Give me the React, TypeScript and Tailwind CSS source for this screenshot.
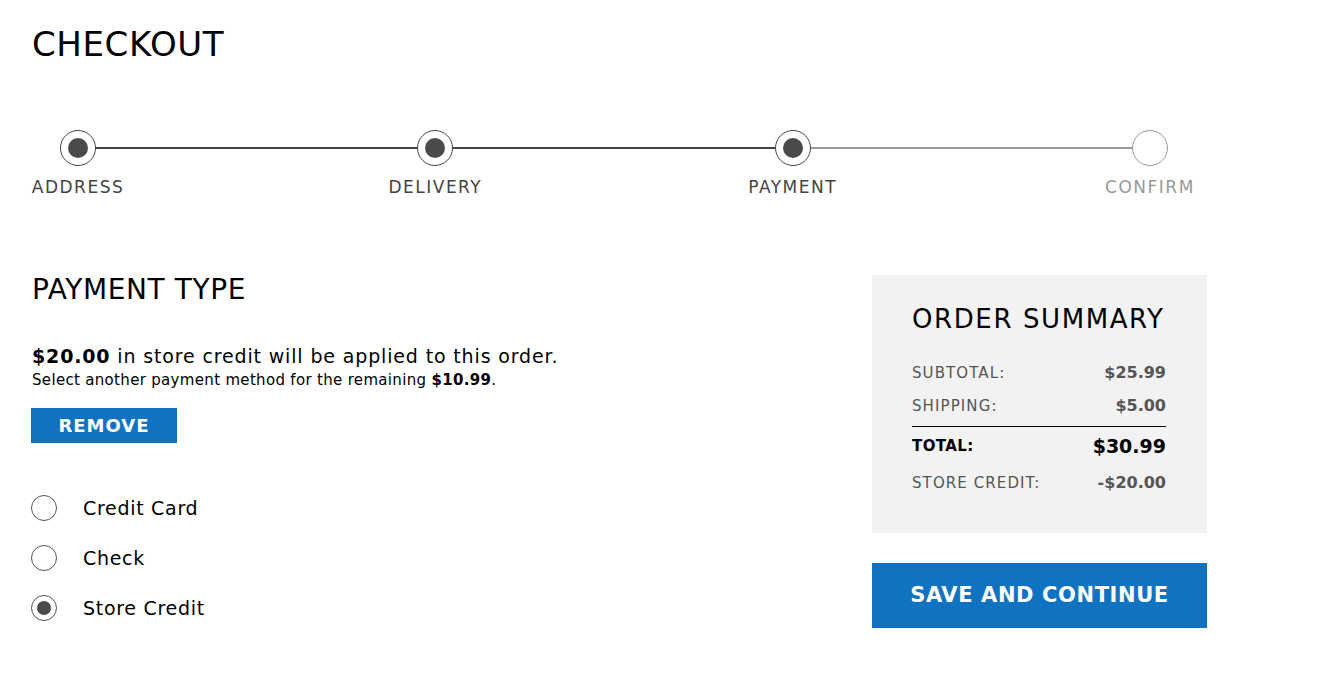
import React from "react";

const steps = [
  { label: "ADDRESS", done: true },
  { label: "DELIVERY", done: true },
  { label: "PAYMENT", done: true },
  { label: "CONFIRM", done: false },
];

const StepDot = ({ done }: { done: boolean }) =>
  done ? (
    <div className="w-[36px] h-[36px] rounded-full border-[1.5px] border-[#444] flex items-center justify-center shrink-0">
      <div className="w-[20px] h-[20px] rounded-full bg-[#4a4a4a]"></div>
    </div>
  ) : (
    <div className="w-[36px] h-[36px] rounded-full border-[1.5px] border-[#9a9a9a] shrink-0"></div>
  );

const Radio = ({ label, checked }: { label: string; checked?: boolean }) => (
  <div className="flex items-center h-[26px]">
    <div className="w-[26px] h-[26px] rounded-full border-[1.5px] border-[#555] flex items-center justify-center">
      {checked && <div className="w-[14px] h-[14px] rounded-full bg-[#4a4a4a]"></div>}
    </div>
    <span className="ml-[26px] text-[19px] leading-none tracking-[0.7px] text-black">{label}</span>
  </div>
);

const SummaryRow = ({ label, value }: { label: string; value: string }) => (
  <div className="flex items-center justify-between h-[20px]">
    <span className="text-[15px] leading-none tracking-[1.1px] text-[#555]">{label}</span>
    <span className="text-[16px] leading-none font-bold text-[#555]">{value}</span>
  </div>
);

export default function App() {
  return (
    <div
      className="bg-white w-[1327px] h-[696px] pl-[31px] pt-[27px] text-black"
      style={{ fontFamily: '"DejaVu Sans", sans-serif' }}
    >
      <h1 className="text-[34px] leading-none font-normal tracking-[0.6px] pl-[1px]">CHECKOUT</h1>

      {/* progress */}
      <div className="w-[1165px] mt-[69px] pl-[1px]">
        <div className="flex items-center px-[28px]">
          {steps.map((s, i) => (
            <React.Fragment key={s.label}>
              <StepDot done={s.done} />
              {i < steps.length - 1 && (
                <div
                  className={
                    i < 2 ? "flex-1 h-[2px] bg-[#444]" : "flex-1 h-[2px] bg-[#9a9a9a]"
                  }
                ></div>
              )}
            </React.Fragment>
          ))}
        </div>
        <div className="flex justify-between mt-[13px]">
          {steps.map((s) => (
            <div
              key={s.label}
              className={
                s.done
                  ? "w-[92px] flex justify-center text-[17px] leading-none tracking-[1.5px] text-[#444] whitespace-nowrap"
                  : "w-[92px] flex justify-center text-[17px] leading-none tracking-[1.5px] text-[#999] whitespace-nowrap"
              }
            >
              {s.label}
            </div>
          ))}
        </div>
      </div>

      <div className="flex items-start mt-[79px] w-[1176px]">
        {/* payment type */}
        <div className="flex-1 pt-[1px]">
          <h2 className="text-[28px] leading-none font-normal tracking-[0.6px] pl-[1px]">PAYMENT TYPE</h2>
          <p className="mt-[43px] text-[19px] leading-none tracking-[0.85px] pl-[1px]">
            <span className="font-bold">$20.00</span> in store credit will be applied to this order.
          </p>
          <p className="mt-[7px] text-[15px] leading-none tracking-[0.32px] pl-[1px]">
            Select another payment method for the remaining <span className="font-bold">$10.99</span>.
          </p>
          <button className="mt-[20px] w-[146px] h-[35px] bg-[#0f73c1] text-white font-bold text-[18px] leading-none tracking-[1px]">
            REMOVE
          </button>
          <div className="mt-[52px] flex flex-col gap-[24px]">
            <Radio label="Credit Card" />
            <Radio label="Check" />
            <Radio label="Store Credit" checked />
          </div>
        </div>

        {/* summary */}
        <div className="w-[335px]">
          <div className="bg-[#f2f2f2] h-[258px] pl-[40px] pr-[41px] pt-[31px]">
            <h3 className="text-[26px] leading-none font-normal tracking-[1.6px] whitespace-nowrap">
              ORDER SUMMARY
            </h3>
            <div className="mt-[31px]">
              <SummaryRow label="SUBTOTAL:" value="$25.99" />
              <div className="mt-[13px]">
                <SummaryRow label="SHIPPING:" value="$5.00" />
              </div>
              <div className="mt-[10px] border-t border-black"></div>
              <div className="mt-[9px] flex items-center justify-between h-[20px]">
                <span className="text-[15px] leading-none font-bold tracking-[0.4px]">TOTAL:</span>
                <span className="text-[19px] leading-none font-bold">$30.99</span>
              </div>
              <div className="mt-[17px]">
                <SummaryRow label="STORE CREDIT:" value="-$20.00" />
              </div>
            </div>
          </div>
          <button className="mt-[30px] w-full h-[65px] bg-[#0f73c1] text-white font-bold text-[21px] leading-none tracking-[0.6px]">
            SAVE AND CONTINUE
          </button>
        </div>
      </div>
    </div>
  );
}
